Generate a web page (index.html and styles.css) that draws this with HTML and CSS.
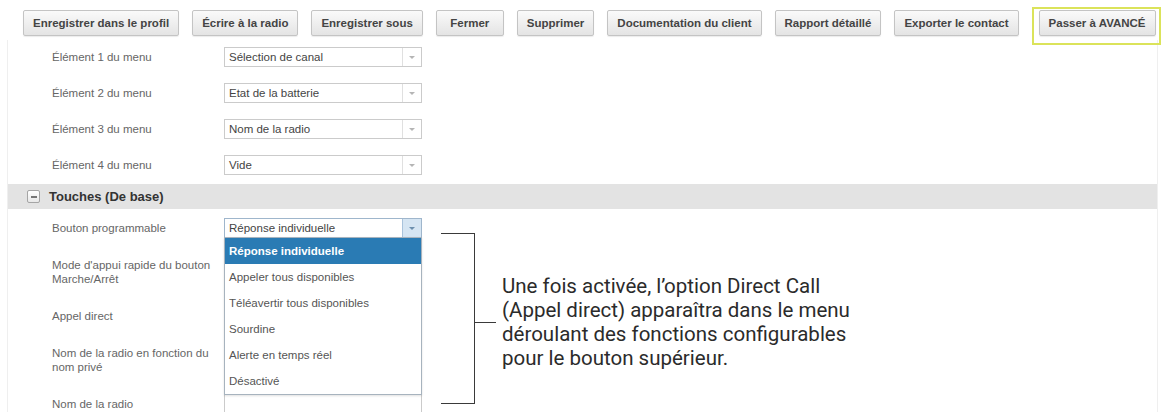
FILE: index.html
```html
<!doctype html>
<html lang="fr">
<head>
	<meta charset="UTF-8">
	<title>Configuration de la radio</title>
	<link rel="stylesheet" href="styles.css">
</head>
<body>
	<div class="toolbar">
		<button class="tool-btn">Enregistrer dans le profil</button>
		<button class="tool-btn">Écrire à la radio</button>
		<button class="tool-btn">Enregistrer sous</button>
		<button class="tool-btn">Fermer</button>
		<button class="tool-btn">Supprimer</button>
		<button class="tool-btn">Documentation du client</button>
		<button class="tool-btn">Rapport détaillé</button>
		<button class="tool-btn">Exporter le contact</button>
		<span class="tool-mark"><button class="tool-btn">Passer à AVANCÉ</button></span>
	</div>

	<div class="panel">
		<!-- menu -->
		<div class="form form-menu">
			<div class="form-row">
				<span class="form-label">Élément 1 du menu</span>
				<span class="select"><span class="select-value">Sélection de canal</span><span class="select-arrow"></span></span>
			</div>
			<div class="form-row">
				<span class="form-label">Élément 2 du menu</span>
				<span class="select"><span class="select-value">Etat de la batterie</span><span class="select-arrow"></span></span>
			</div>
			<div class="form-row">
				<span class="form-label">Élément 3 du menu</span>
				<span class="select"><span class="select-value">Nom de la radio</span><span class="select-arrow"></span></span>
			</div>
			<div class="form-row">
				<span class="form-label">Élément 4 du menu</span>
				<span class="select"><span class="select-value">Vide</span><span class="select-arrow"></span></span>
			</div>
		</div>

		<div class="group-head">
			<span class="group-toggle"></span>
			<span class="group-title">Touches (De base)</span>
		</div>

		<!-- touches -->
		<div class="form form-keys">
			<div class="form-row">
				<span class="form-label">Bouton programmable</span>
				<span class="select select-open">
					<span class="select-value">Réponse individuelle</span><span class="select-arrow"></span>
					<ul class="select-list">
						<li class="select-item item-active">Réponse individuelle</li>
						<li class="select-item">Appeler tous disponibles</li>
						<li class="select-item">Téléavertir tous disponibles</li>
						<li class="select-item">Sourdine</li>
						<li class="select-item">Alerte en temps réel</li>
						<li class="select-item">Désactivé</li>
					</ul>
				</span>
			</div>
			<div class="form-row">
				<span class="form-label">Mode d'appui rapide du bouton Marche/Arrêt</span>
			</div>
			<div class="form-row">
				<span class="form-label">Appel direct</span>
			</div>
			<div class="form-row">
				<span class="form-label">Nom de la radio en fonction du nom privé</span>
			</div>
			<div class="form-row">
				<span class="form-label">Nom de la radio</span>
				<span class="input"></span>
			</div>

			<div class="callout">
				<span class="callout-bracket"></span>
				<p class="callout-text">Une fois activée, l’option Direct Call (Appel direct) apparaîtra dans le menu déroulant des fonctions configurables pour le bouton supérieur.</p>
			</div>
		</div>
	</div>
</body>
</html>
```

FILE: styles.css
```css
*{margin: 0;padding: 0;box-sizing: border-box;}
body{background: #fff;font-family: "Liberation Sans", Arial, sans-serif;color: #555;height: 412px;overflow: hidden;}

/*toolbar*/
.toolbar{display: flex;align-items: flex-start;gap: 13px;padding: 10px 0 0 23px;height: 40px;}
.tool-btn{height: 26px;min-width: 68px;padding: 0 9px;font: bold 11.5px "Liberation Sans", Arial, sans-serif;color: #444;
	background: linear-gradient(#fafafa, #e4e4e4);border: 1px solid #c4c4c4;border-radius: 2px;box-shadow: 0 1px 1px rgba(0,0,0,.08);}
.tool-mark{margin-top: -3px;padding: 1px 3px 7px 5px;border: 2px solid #dbe35a;}

/*panel*/
.panel{margin: 0 4px 0 7px;border-left: 1px solid #efefef;border-right: 1px solid #efefef;height: 372px;}
.form{padding-left: 44px;display: flex;flex-direction: column;}
.form-menu{padding-top: 3px;gap: 8px;}
.form-keys{padding-top: 5px;gap: 16px;position: relative;}
.form-row{display: flex;align-items: center;min-height: 28px;}
.form-label{width: 172px;padding-right: 12px;font-size: 11.5px;line-height: 14px;color: #666;}

.select{position: relative;display: flex;width: 198px;height: 20px;border: 1px solid #cbcbcb;background: #fff;}
.select-value{flex: 1;padding-left: 4px;font-size: 11.5px;line-height: 18px;color: #444;}
.select-arrow{width: 19px;border-left: 1px solid #e0e0e0;display: flex;align-items: center;justify-content: center;}
.select-arrow::after{content: "";border-top: 3px solid #b5b5b5;border-left: 3px solid transparent;border-right: 3px solid transparent;}
.select-open{border-color: #9fb6cc;}
.select-open .select-arrow{background: #d5e5f3;border-left-color: #a9c3dc;}
.select-open .select-arrow::after{border-top-color: #6d8fae;}

/*dropdown*/
.select-list{position: absolute;left: -1px;top: 18px;width: 198px;list-style: none;background: #fff;
	border: 1px solid #a7b3be;box-shadow: 0 1px 2px rgba(0,0,0,.12);z-index: 2;}
.select-item{height: 26px;line-height: 26px;padding-left: 4px;font-size: 11.5px;color: #555;}
.item-active{background: #2a7bb4;color: #fff;font-weight: bold;}

.input{width: 198px;height: 20px;border: 1px solid #cbcbcb;background: #fff;}

.group-head{display: flex;align-items: center;height: 25px;margin-top: 5px;background: #e3e3e3;padding-left: 19px;}
.group-toggle{width: 13px;height: 13px;border: 1px solid #a5a5a5;border-radius: 2px;background: linear-gradient(#fff, #e8e8e8);
	display: flex;align-items: center;justify-content: center;margin-right: 9px;}
.group-toggle::after{content: "";width: 6px;height: 2px;background: #777;}
.group-title{font-weight: bold;font-size: 13px;color: #333;}

/*annotation*/
.callout{position: absolute;left: 433px;top: 24px;display: flex;align-items: center;}
.callout-bracket{width: 34px;height: 171px;border: solid #3a3a3a;border-width: 1.5px 1.5px 1.5px 0;}
.callout-text{position: relative;margin: 6px 0 0 27px;width: 358px;font: 20.5px/24px Roboto, "Noto Sans", sans-serif;color: #2b2b2b;}
.callout-text::before{content: "";position: absolute;left: -27px;top: 50%;width: 21px;height: 1.5px;background: #3a3a3a;}
```
